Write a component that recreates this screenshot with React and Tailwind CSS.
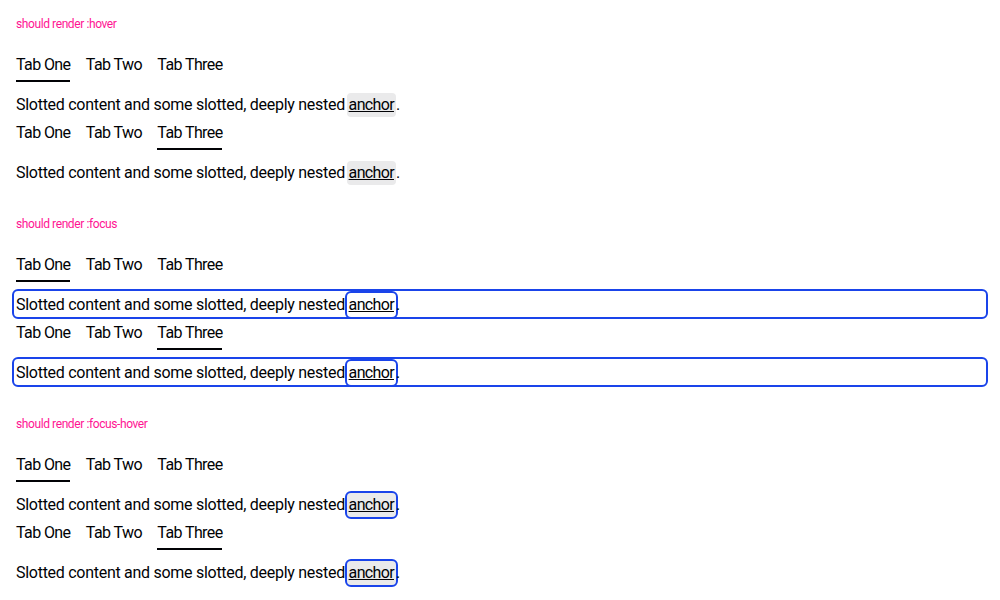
const tabs = ["Tab One", "Tab Two", "Tab Three"];

const TabBar = ({ active }) => (
  <div className="flex gap-4">
    {tabs.map((t, i) => (
      <div key={t} className="flex flex-col">
        <span className="leading-6 text-base tracking-[-0.6px] -mr-[0.6px] pt-px">{t}</span>
        <span className={`mt-[3px] h-[2px] ${i === active ? "bg-[#010205]" : "bg-transparent"}`} />
      </div>
    ))}
  </div>
);

const Panel = ({ panelFocus, anchorHover, anchorFocus }) => (
  <div
    className={`h-[22px] leading-[22px] text-base tracking-[-0.28px] rounded-[2px] ${
      panelFocus ? "outline-2 outline-offset-2 outline-[#1a44ea]" : ""
    }`}
  >
    Slotted content and some slotted, deeply nested{" "}
    <a
      href="#"
      className={`inline-block h-6 leading-6 -ml-[2px] px-[2px] rounded-[4px] underline tracking-[-0.65px] ${
        anchorHover ? "bg-[#eaeaeb]" : ""
      } ${anchorFocus ? "outline-2 outline-offset-0 outline-[#1a44ea]" : ""}`}
    >
      anchor
    </a>
    .
  </div>
);

const Section = ({ title, panelFocus, anchorHover, anchorFocus }) => (
  <div className="h-[200px] pt-4">
    <p className="text-xs leading-4 tracking-[-0.4px] text-[#ff1493]">{title}</p>
    <div className="mt-5">
      <TabBar active={0} />
    </div>
    <div className="mt-[11px]">
      <Panel panelFocus={panelFocus} anchorHover={anchorHover} anchorFocus={anchorFocus} />
    </div>
    <div className="mt-[5px]">
      <TabBar active={2} />
    </div>
    <div className="mt-[11px]">
      <Panel panelFocus={panelFocus} anchorHover={anchorHover} anchorFocus={anchorFocus} />
    </div>
  </div>
);

export default function App() {
  return (
    <div className="w-[1000px] h-[600px] bg-white px-4 text-[#010205] font-['Roboto',sans-serif] overflow-hidden">
      <Section title="should render :hover" anchorHover />
      <Section title="should render :focus" panelFocus anchorFocus />
      <Section title="should render :focus-hover" anchorHover anchorFocus />
    </div>
  );
}
